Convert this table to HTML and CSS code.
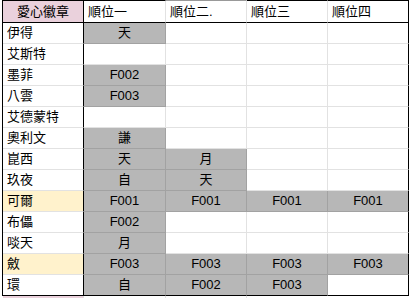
FILE: index.html
```html
<!DOCTYPE html>
<html lang="zh-Hant">
<head>
<meta charset="utf-8">
<title>愛心徽章</title>
<link rel="stylesheet" href="styles.css">
</head>
<body>
<div class="sheet">
  <table class="grid">
    <thead>
      <tr>
        <th class="c1 head-name">愛心徽章</th>
        <th class="c2">順位一</th>
        <th class="c3 top-gray">順位二.</th>
        <th class="c4">順位三</th>
        <th class="c5 last">順位四</th>
      </tr>
    </thead>
    <tbody>
      <tr><td class="name">伊得</td><td class="g">天</td><td></td><td></td><td class="last"></td></tr>
      <tr><td class="name">艾斯特</td><td></td><td></td><td></td><td class="last"></td></tr>
      <tr><td class="name">墨菲</td><td class="g">F002</td><td></td><td></td><td class="last"></td></tr>
      <tr><td class="name">八雲</td><td class="g">F003</td><td></td><td></td><td class="last"></td></tr>
      <tr><td class="name">艾德蒙特</td><td></td><td></td><td></td><td class="last"></td></tr>
      <tr><td class="name">奧利文</td><td class="g">謙</td><td></td><td></td><td class="last"></td></tr>
      <tr><td class="name">崑西</td><td class="g">天</td><td class="g">月</td><td></td><td class="last"></td></tr>
      <tr><td class="name">玖夜</td><td class="g">自</td><td class="g">天</td><td></td><td class="last"></td></tr>
      <tr><td class="name y">可爾</td><td class="g">F001</td><td class="g">F001</td><td class="g">F001</td><td class="g last">F001</td></tr>
      <tr><td class="name">布儡</td><td class="g">F002</td><td></td><td></td><td class="last"></td></tr>
      <tr><td class="name">啖天</td><td class="g">月</td><td></td><td></td><td class="last"></td></tr>
      <tr><td class="name y">斂</td><td class="g">F003</td><td class="g">F003</td><td class="g">F003</td><td class="g last">F003</td></tr>
      <tr class="end"><td class="name">環</td><td class="g">自</td><td class="g">F002</td><td class="g">F003</td><td class="last"></td></tr>
    </tbody>
  </table>
  <div class="next-row">
    <div class="next-name"></div>
    <div class="next-cell w2"></div>
    <div class="next-cell w3"></div>
    <div class="next-cell w4"></div>
  </div>
</div>
</body>
</html>
```

FILE: styles.css
```css
html, body {
  margin: 0;
  padding: 0;
  background: #ffffff;
  overflow: hidden;
}

.sheet {
  padding-left: 2px;
  font-family: "Liberation Sans", "Noto Sans CJK TC", sans-serif;
  font-size: 13px;
  color: #000000;
}

.grid {
  border-collapse: separate;
  border-spacing: 0;
  table-layout: fixed;
  width: 406px;
  border-left: 1px solid #000000;
}

.grid th,
.grid td {
  box-sizing: border-box;
  padding: 0 4px;
  line-height: 20px;
  font-weight: normal;
  white-space: nowrap;
  overflow: hidden;
  border-right: 1px solid #e2e2e2;
  border-bottom: 1px solid #e2e2e2;
  background: #ffffff;
}

.grid th {
  height: 23px;
  text-align: left;
  border-top: 1px solid #000000;
  border-bottom: 1px solid #000000;
  line-height: 21px;
}

.grid th.top-gray {
  border-top-color: #999999;
}

.grid th.c1 { width: 81px; }
.grid th.c2 { width: 82px; }
.grid th.c3 { width: 81px; }
.grid th.c4 { width: 81px; }
.grid th.c5 { width: 81px; }

.grid th.head-name {
  background: #ead1dc;
  text-align: center;
  border-right-color: #000000;
}

.grid td {
  height: 21px;
  text-align: center;
}

.grid td.name {
  text-align: left;
  border-right-color: #000000;
}

.grid td.y {
  background: #fff2cc;
}

.grid td.g {
  background: #b7b7b7;
  border-right-color: #a2a2a2;
  border-bottom-color: #a2a2a2;
}

.grid .last,
.grid td.g.last {
  border-right-color: #000000;
}

.grid tr.end td {
  border-bottom-color: #000000;
}

.next-row {
  display: flex;
  height: 3px;
  padding-left: 1px;
}

.next-name {
  width: 80px;
  background: #ead1dc;
}

.next-cell {
  border-left: 1px solid #e2e2e2;
}

.next-cell.w2 { width: 81px; }
.next-cell.w3 { width: 80px; }
.next-cell.w4 { width: 80px; }
```
